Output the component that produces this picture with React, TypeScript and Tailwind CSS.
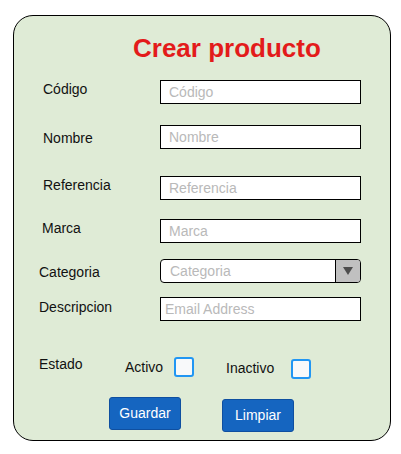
import React from 'react';

const font = { fontFamily: '"Liberation Sans", Arial, sans-serif' };

interface FieldRowProps {
  label: string;
  placeholder: string;
  labelPad: string;
  rowGap: string;
  labelDrop: string;
  inputPad?: string;
}

const FieldRow: React.FC<FieldRowProps> = ({ label, placeholder, labelPad, rowGap, labelDrop, inputPad = 'pl-2' }) => (
  <div className={`flex items-start ${rowGap}`}>
    <span className={`w-[146px] ${labelPad} ${labelDrop} text-[14px] leading-4 text-[#111]`}>{label}</span>
    <input
      type="text"
      placeholder={placeholder}
      className={`w-[201px] h-[24px] border border-black bg-white ${inputPad} text-[14px] text-black placeholder:text-[#b9b9b9] outline-none`}
    />
  </div>
);

const Checkbox: React.FC<{ className?: string }> = ({ className }) => (
  <span className={`block w-[20px] h-[20px] rounded-[3px] border-2 border-[#2196f3] bg-[#f8f9fa] ${className ?? ''}`} />
);

export default function App() {
  return (
    <div className="w-[401px] h-[454px] bg-white pt-[15px] pl-[13px]" style={font}>
      <div className="w-[378px] h-[426px] rounded-[20px] border border-black bg-[#dfebd6]">
        <h1 className="mt-[17px] pl-[119px] text-[26px] leading-[30px] font-bold text-[#e31b1b]">Crear producto</h1>

        <FieldRow label="Código" placeholder="Código" labelPad="pl-[29px]" rowGap="mt-[17px]" labelDrop="mt-[1px]" />
        <FieldRow label="Nombre" placeholder="Nombre" labelPad="pl-[29px]" rowGap="mt-[21px]" labelDrop="mt-[5px]" />
        <FieldRow label="Referencia" placeholder="Referencia" labelPad="pl-[29px]" rowGap="mt-[27px]" labelDrop="mt-[1px]" />
        <FieldRow label="Marca" placeholder="Marca" labelPad="pl-[28px]" rowGap="mt-[19px]" labelDrop="mt-[1px]" />

        <div className="flex items-start mt-[16px]">
          <span className="w-[146px] pl-[25px] mt-[5px] text-[14px] leading-4 text-[#111]">Categoria</span>
          <div className="flex w-[201px] h-[24px] rounded-[4px] border border-black bg-white overflow-hidden">
            <span className="flex-1 pl-[9px] text-[14px] leading-[22px] text-[#b9b9b9]">Categoria</span>
            <span className="flex w-[25px] items-center justify-center border-l border-black bg-[#c0c0c0]">
              <svg width="10" height="8" viewBox="0 0 10 8">
                <path d="M0 0 H10 L5 8 Z" fill="#4d4d4d" />
              </svg>
            </span>
          </div>
        </div>

        <FieldRow
          label="Descripcion"
          placeholder="Email Address"
          labelPad="pl-[25px]"
          rowGap="mt-[14px]"
          labelDrop="mt-[2px]"
          inputPad="pl-1"
        />

        <div className="flex items-start mt-[35px] text-[14px] leading-4 text-[#111]">
          <span className="w-[111px] pl-[25px]">Estado</span>
          <span className="w-[49px] mt-[3px]">Activo</span>
          <Checkbox className="mt-[1px]" />
          <span className="w-[65px] ml-[32px] mt-[4px]">Inactivo</span>
          <Checkbox className="mt-[3px]" />
        </div>

        <div className="flex items-start mt-[18px]">
          <button className="ml-[95px] w-[72px] h-[33px] rounded-[3px] border border-[#0f4fa0] bg-[#1565c0] text-[14px] text-white">
            Guardar
          </button>
          <button className="ml-[41px] mt-[2px] w-[72px] h-[33px] rounded-[3px] border border-[#0f4fa0] bg-[#1565c0] text-[14px] text-white">
            Limpiar
          </button>
        </div>
      </div>
    </div>
  );
}
